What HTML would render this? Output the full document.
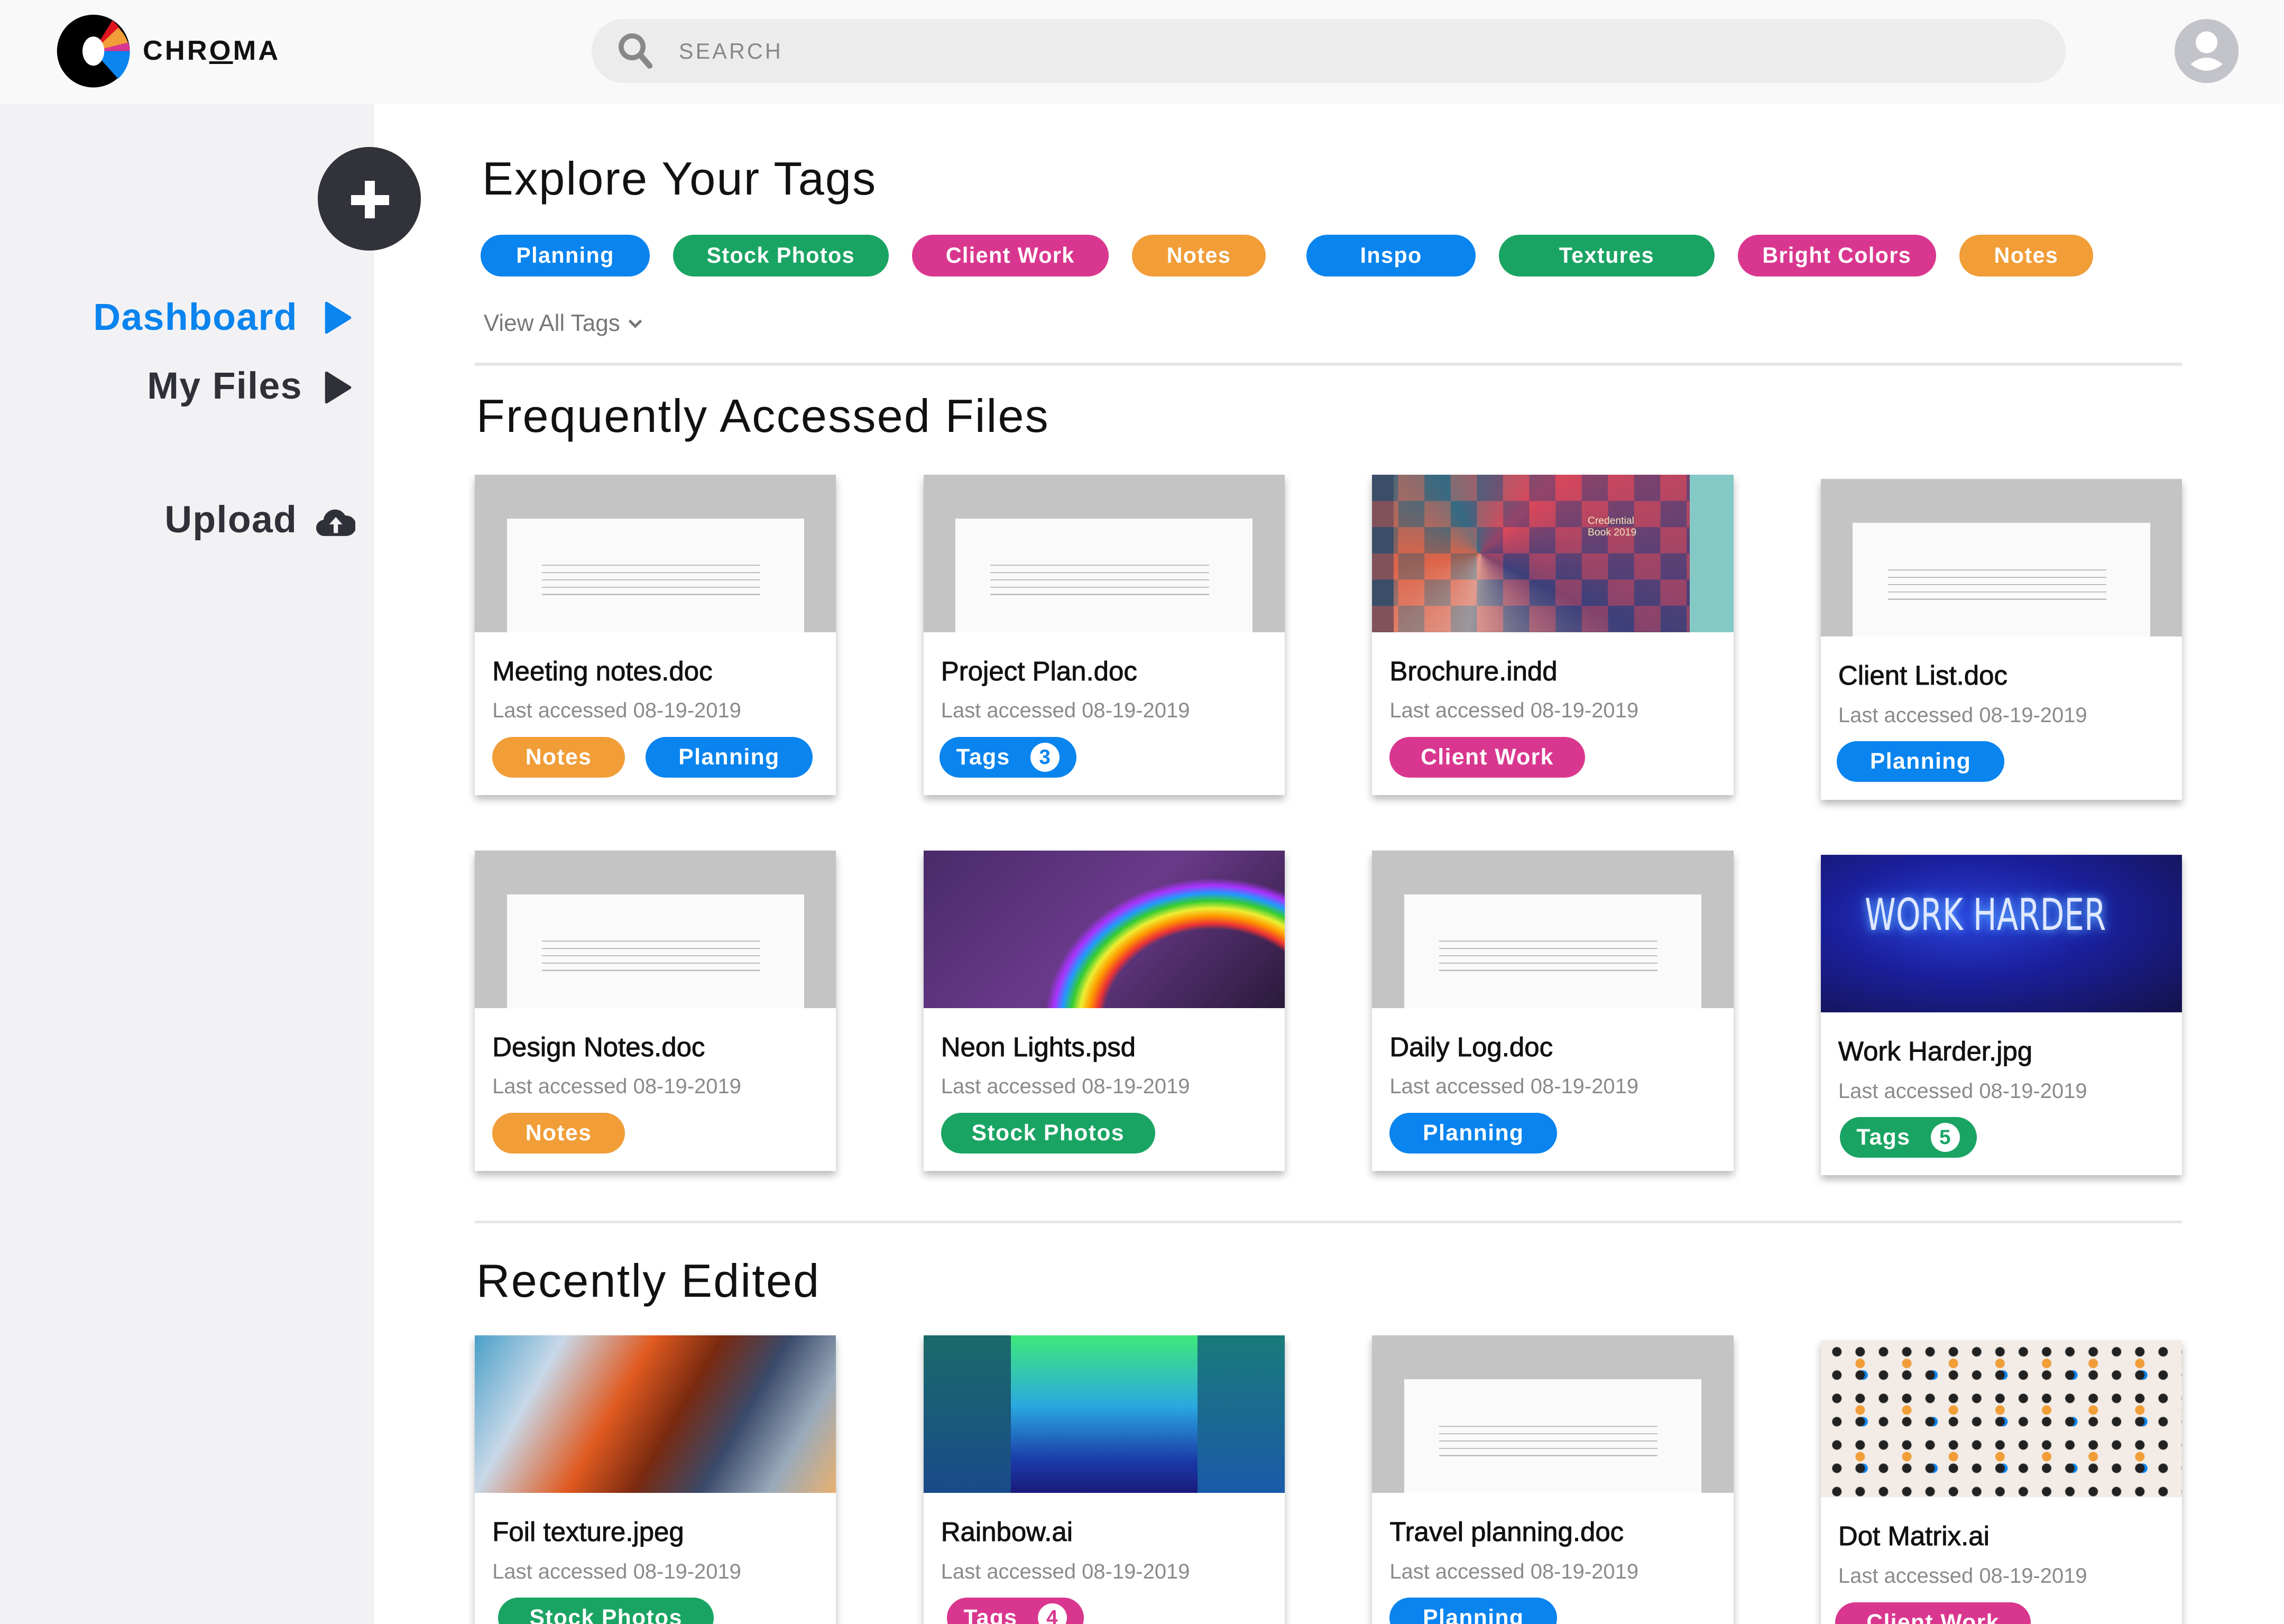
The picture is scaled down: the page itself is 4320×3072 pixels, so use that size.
<!DOCTYPE html>
<html><head><meta charset="utf-8"><style>
html,body{margin:0;padding:0;width:4320px;height:3072px;overflow:hidden;background:#fff}
#w{position:relative;width:1568px;height:1115px;zoom:2.7551;font-family:"Liberation Sans",sans-serif;overflow:hidden;background:#fff}
.a{position:absolute}
.tag{position:absolute;height:29px;border-radius:15px;color:#fff;font-size:15px;font-weight:bold;letter-spacing:.5px;display:flex;align-items:center;justify-content:center}
.b{background:#0a84ee}.g{background:#1aa463}.p{background:#d9378f}.o{background:#f19d38}
.card{position:absolute;width:248px;height:220px;background:#fff;box-shadow:0 3px 5px rgba(0,0,0,.28)}
.img{position:absolute;left:0;top:0;width:248px;height:108px;overflow:hidden}
.doc{background:#c4c4c4}
.doc i{position:absolute;left:22px;top:30px;width:204px;height:78px;background:#fafafa}
.doc i:before{content:"";position:absolute;left:24px;top:30px;width:150px;height:24px;background:repeating-linear-gradient(#fafafa 0 2px,#aaa 2px 2.6px,#fafafa 2.6px 5px)}
.t{position:absolute;left:12px;top:124px;font-size:18.5px;color:#111;-webkit-text-stroke:.35px #111}
.d{position:absolute;left:12px;top:154px;font-size:14.5px;color:#8a8a8a}
.card .tag{top:180px;height:28px;font-size:15.5px}
.n{display:inline-flex;width:20px;height:20px;border-radius:10px;background:#fff;align-items:center;justify-content:center;font-size:14px;margin-left:14px}
h2{position:absolute;margin:0;font-weight:normal;font-size:32px;color:#111;letter-spacing:.8px}
</style></head><body><div id="w">
<div class="a" style="left:0;top:0;width:1568px;height:71px;background:#f9f9fa"></div>
<svg class="a" style="left:38px;top:9px" width="52" height="52" viewBox="0 0 52 52">
<circle cx="26" cy="26" r="25" fill="#000"/>
<path d="M26 26 L39 5 A25 25 0 0 1 45 12 Z" fill="#e0141e"/>
<path d="M26 26 L43 10 A25 25 0 0 1 50 21 Z" fill="#f19d38"/>
<path d="M26 26 L50 20 A25 25 0 0 1 51 26 Z" fill="#d9378f"/>
<path d="M26 26 L51 26 A25 25 0 0 1 43 45 Z" fill="#0a84ee"/>
<ellipse cx="26" cy="26" rx="7.5" ry="10" fill="#fff"/>
</svg>
<div class="a" style="left:98px;top:24px;font-size:19px;font-weight:bold;letter-spacing:1.5px;color:#111">CHR<span style="text-decoration:underline">O</span>MA</div>
<div class="a" style="left:406px;top:13px;width:1012px;height:44px;border-radius:22px;background:#ececec"></div>
<svg class="a" style="left:424px;top:22px" width="26" height="26" viewBox="0 0 26 26"><circle cx="10" cy="10" r="7.5" fill="none" stroke="#888" stroke-width="3.5"/><path d="M15.5 15.5 L22 23" stroke="#888" stroke-width="4" stroke-linecap="round"/></svg>
<div class="a" style="left:466px;top:27px;font-size:15px;letter-spacing:1.5px;color:#888">SEARCH</div>
<svg class="a" style="left:1493px;top:13px" width="44" height="44" viewBox="0 0 44 44"><circle cx="22" cy="22" r="22" fill="#c3c3ca"/><circle cx="22" cy="16" r="7.5" fill="#fff"/><path d="M11 31 Q22 22 33 31 Q22 40 11 31Z" fill="#fff"/></svg>
<div class="a" style="left:0;top:71px;width:257px;height:1044px;background:#f2f2f5"></div>
<div class="a" style="left:218px;top:101px;width:71px;height:71px;border-radius:50%;background:#31323a"></div>
<div class="a" style="left:241px;top:134px;width:26px;height:7px;background:#fff"></div>
<div class="a" style="left:250.5px;top:124px;width:7px;height:26px;background:#fff"></div>
<div class="a" style="left:64px;top:203px;font-size:26px;font-weight:bold;color:#0a84ee;letter-spacing:.5px">Dashboard</div>
<svg class="a" style="left:222px;top:206px" width="20" height="24" viewBox="0 0 20 24"><path d="M2 2 L18 12 L2 22Z" fill="#0a84ee" stroke="#0a84ee" stroke-width="2" stroke-linejoin="round"/></svg>
<div class="a" style="left:101px;top:250px;font-size:26px;font-weight:bold;color:#2f3038;letter-spacing:.5px">My Files</div>
<svg class="a" style="left:222px;top:254px" width="20" height="24" viewBox="0 0 20 24"><path d="M2 2 L18 12 L2 22Z" fill="#2f3038" stroke="#2f3038" stroke-width="2" stroke-linejoin="round"/></svg>
<div class="a" style="left:113px;top:342px;font-size:26px;font-weight:bold;color:#2f3038;letter-spacing:.5px">Upload</div>
<svg class="a" style="left:217px;top:347px" width="27" height="22" viewBox="0 0 27 22"><path d="M6 21 A5.5 5.5 0 0 1 5 10 A8 8 0 0 1 20 7 A6.5 6.5 0 0 1 21 21Z" fill="#2f3038"/><path d="M13.5 8 L9 13 H12 V19 H15 V13 H18Z" fill="#f2f2f5"/></svg>
<h2 style="left:331px;top:104px">Explore Your Tags</h2>
<div class="tag b" style="left:330px;top:161px;width:116px">Planning</div>
<div class="tag g" style="left:462px;top:161px;width:148px">Stock Photos</div>
<div class="tag p" style="left:626px;top:161px;width:135px">Client Work</div>
<div class="tag o" style="left:777px;top:161px;width:92px">Notes</div>
<div class="tag b" style="left:897px;top:161px;width:116px">Inspo</div>
<div class="tag g" style="left:1029px;top:161px;width:148px">Textures</div>
<div class="tag p" style="left:1193px;top:161px;width:136px">Bright Colors</div>
<div class="tag o" style="left:1345px;top:161px;width:92px">Notes</div>
<div class="a" style="left:332px;top:213px;font-size:16px;color:#777">View All Tags <svg width="12" height="10" viewBox="0 0 12 10"><path d="M2 3 L6 7 L10 3" fill="none" stroke="#777" stroke-width="1.8"/></svg></div>
<div class="a" style="left:326px;top:249px;width:1172px;height:2px;background:#e6e6e6"></div>
<h2 style="left:327px;top:267px">Frequently Accessed Files</h2>
<div class="card" style="left:326px;top:326px"><div class="img doc"><i></i></div><div class="t">Meeting notes.doc</div><div class="d">Last accessed 08-19-2019</div><div class="tag o" style="left:12px;width:91px">Notes</div><div class="tag b" style="left:117px;width:115px">Planning</div></div>
<div class="card" style="left:634px;top:326px"><div class="img doc"><i></i></div><div class="t">Project Plan.doc</div><div class="d">Last accessed 08-19-2019</div><div class="tag b" style="left:11px;width:94px">Tags<span class="n" style="color:#0a84ee">3</span></div></div>
<div class="card" style="left:942px;top:326px"><div class="img" style="background:linear-gradient(90deg,#3a5a5a 0 6%,transparent 6%),conic-gradient(from 45deg at 30% 50%,#d9485b,#3d3f7a,#e8e0b8,#e07b3a,#2f8d8a,#d9485b),linear-gradient(90deg,#c4445a,#7fc6c4)"><div class="a" style="left:0;top:0;width:218px;height:108px;background:repeating-conic-gradient(#d9485b 0 25%,#3d3f7a 0 50%) 0 0/36px 36px;opacity:.45"></div><div class="a" style="right:0;top:0;width:30px;height:108px;background:#85c9c6"></div><div class="a" style="left:148px;top:28px;font-size:7px;color:#f2e6b8;line-height:8px">Credential<br>Book 2019</div></div><div class="t">Brochure.indd</div><div class="d">Last accessed 08-19-2019</div><div class="tag p" style="left:12px;width:134px">Client Work</div></div>
<div class="card" style="left:1250px;top:329px"><div class="img doc"><i></i></div><div class="t">Client List.doc</div><div class="d">Last accessed 08-19-2019</div><div class="tag b" style="left:11px;width:115px">Planning</div></div>
<div class="card" style="left:326px;top:584px"><div class="img doc"><i></i></div><div class="t">Design Notes.doc</div><div class="d">Last accessed 08-19-2019</div><div class="tag o" style="left:12px;width:91px">Notes</div></div>
<div class="card" style="left:634px;top:584px"><div class="img" style="background:radial-gradient(ellipse 150px 130px at 80% 110%,transparent 50%,#e33 53%,#f90 57%,#ee3 61%,#3c3 65%,#29f 69%,#a3f 73%,transparent 77%),linear-gradient(135deg,#4a2a6a,#6a3a8a 50%,#2a1a3a)"></div><div class="t">Neon Lights.psd</div><div class="d">Last accessed 08-19-2019</div><div class="tag g" style="left:12px;width:147px">Stock Photos</div></div>
<div class="card" style="left:942px;top:584px"><div class="img doc"><i></i></div><div class="t">Daily Log.doc</div><div class="d">Last accessed 08-19-2019</div><div class="tag b" style="left:12px;width:115px">Planning</div></div>
<div class="card" style="left:1250px;top:587px"><div class="img" style="background:radial-gradient(ellipse at 40% 40%,#2a3fd8,#1a1f9a 45%,#14124a)"><div class="a" style="left:30px;top:24px;font-size:30px;color:#dfe8ff;font-family:'DejaVu Sans Condensed',sans-serif;text-shadow:0 0 6px #6af,0 0 12px #38f;transform:scaleX(.8);transform-origin:left">WORK HARDER</div></div><div class="t">Work Harder.jpg</div><div class="d">Last accessed 08-19-2019</div><div class="tag g" style="left:13px;width:94px">Tags<span class="n" style="color:#1aa463">5</span></div></div>
<div class="a" style="left:326px;top:838px;width:1172px;height:2px;background:#e6e6e6"></div>
<h2 style="left:327px;top:861px">Recently Edited</h2>
<div class="card" style="left:326px;top:917px"><div class="img" style="background:linear-gradient(120deg,#4aa0c8,#c8d8e8 20%,#e05a20 40%,#7a2a10 55%,#3a4a6a 70%,#9ab 85%,#e8b070)"></div><div class="t">Foil texture.jpeg</div><div class="d">Last accessed 08-19-2019</div><div class="tag g" style="left:16px;width:148px">Stock Photos</div></div>
<div class="card" style="left:634px;top:917px"><div class="img" style="background:linear-gradient(180deg,#3ee87a,#2aa8e0 45%,#1a3aa8 80%,#1a1a7a)"><div class="a" style="left:0;top:0;width:60px;height:108px;background:linear-gradient(#1a6a6a,#1a4a8a)"></div><div class="a" style="right:0;top:0;width:60px;height:108px;background:linear-gradient(#1a7a7a,#1a5aa8)"></div></div><div class="t">Rainbow.ai</div><div class="d">Last accessed 08-19-2019</div><div class="tag p" style="left:16px;width:94px">Tags<span class="n" style="color:#d9378f">4</span></div></div>
<div class="card" style="left:942px;top:917px"><div class="img doc"><i></i></div><div class="t">Travel planning.doc</div><div class="d">Last accessed 08-19-2019</div><div class="tag b" style="left:12px;width:115px">Planning</div></div>
<div class="card" style="left:1250px;top:920px"><div class="img" style="background:radial-gradient(circle at 50% 50%,#222 3px,transparent 3.5px) 0 0/16px 16px,radial-gradient(circle,#f19d38 3px,transparent 3.5px) 8px 0/32px 32px,radial-gradient(circle,#0a84ee 3px,transparent 3.5px) 0 8px/48px 32px,#f3ece6;background-position:3px 0,11px 0,5px 8px"></div><div class="t">Dot Matrix.ai</div><div class="d">Last accessed 08-19-2019</div><div class="tag p" style="left:10px;width:134px">Client Work</div></div>
</div></body></html>
